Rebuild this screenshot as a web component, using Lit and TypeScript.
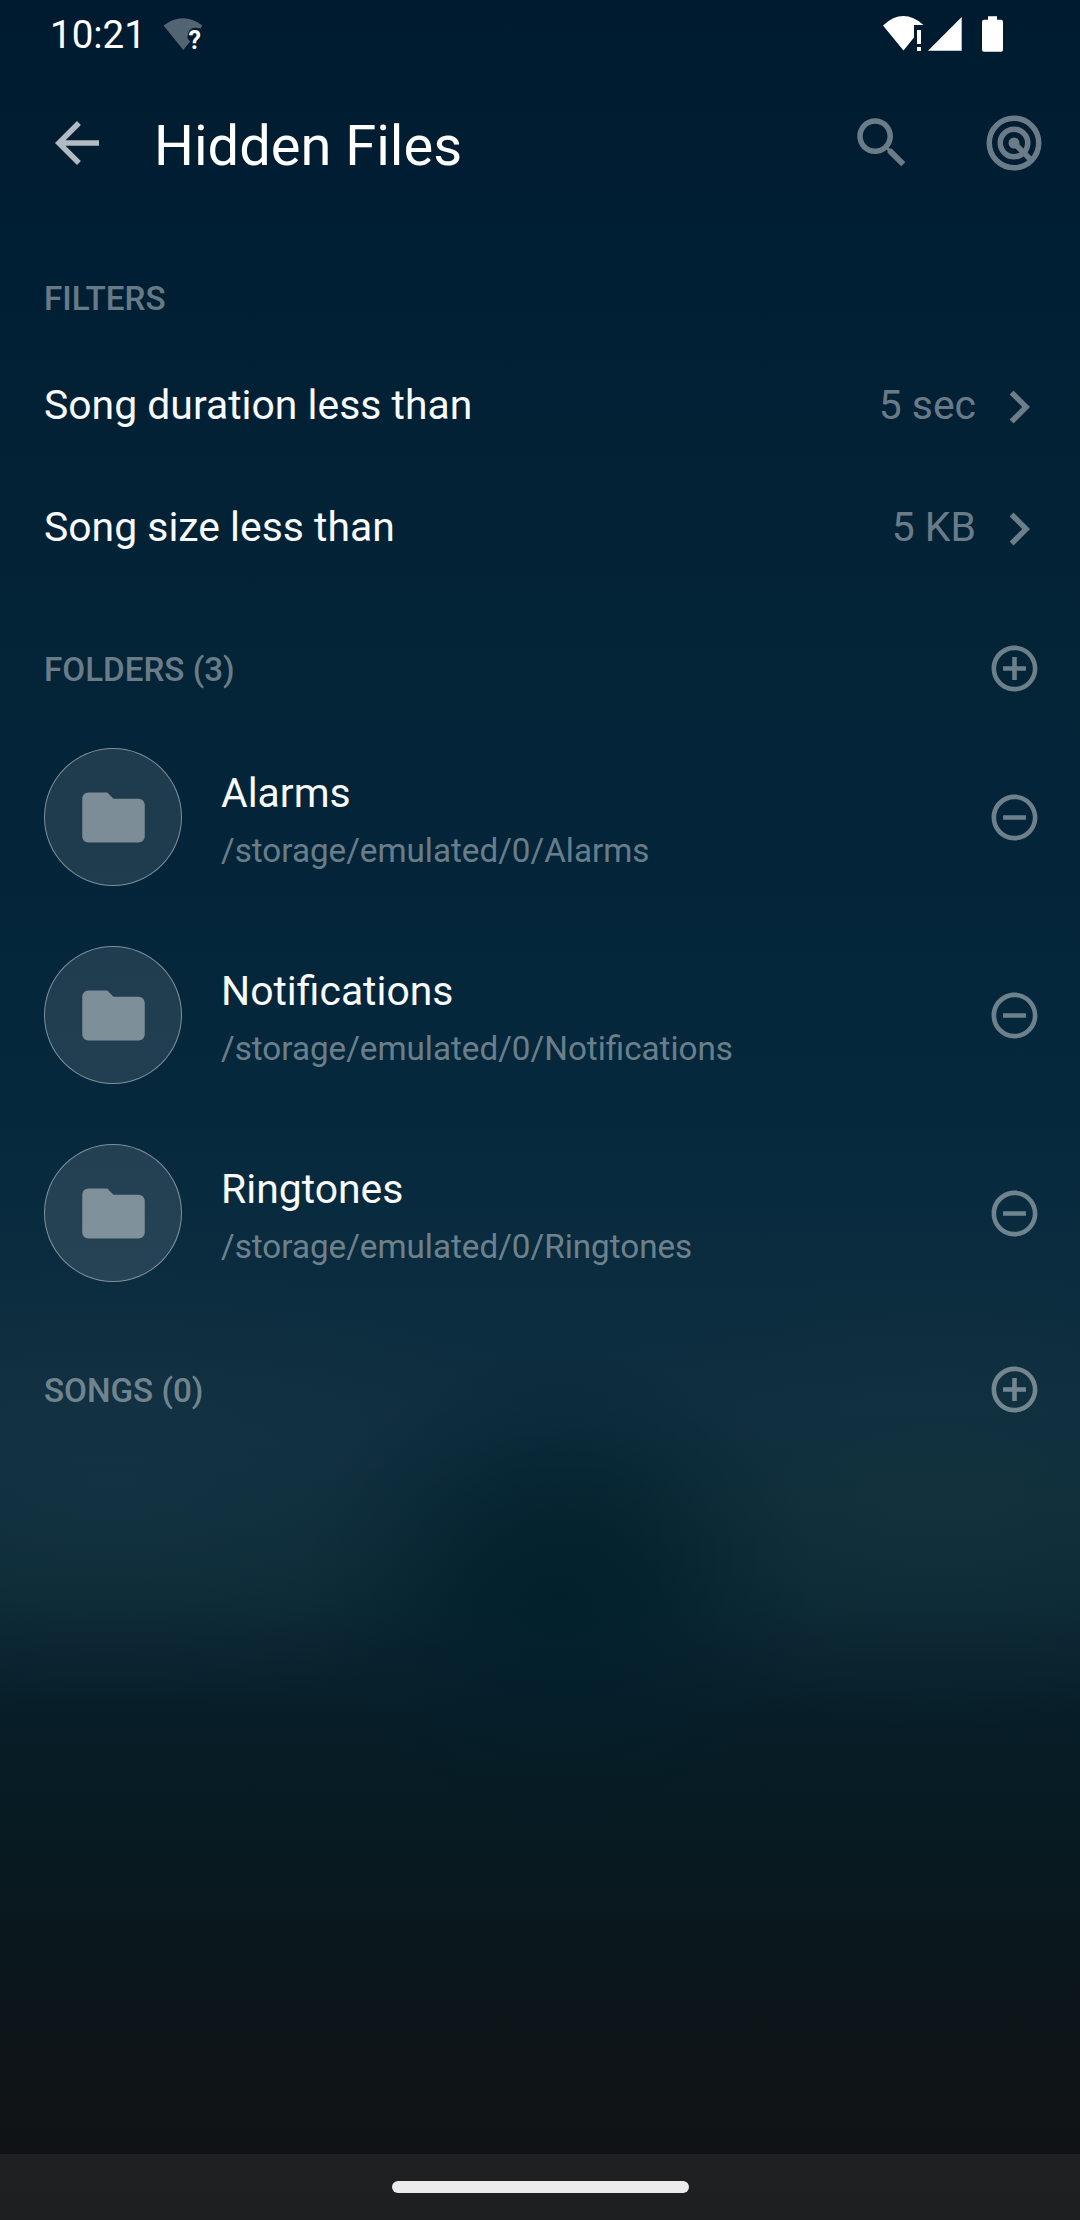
import { LitElement, html, css, svg } from "lit";
import { customElement } from "lit/decorators.js";

const PLUS =
  "M13 7h-2v4H7v2h4v4h2v-4h4v-2h-4V7zm-1-5C6.48 2 2 6.48 2 12s4.48 10 10 10 10-4.48 10-10S17.52 2 12 2zm0 18c-4.41 0-8-3.59-8-8s3.59-8 8-8 8 3.59 8 8-3.59 8-8 8z";
const MINUS =
  "M7 11v2h10v-2H7zm5-9C6.48 2 2 6.48 2 12s4.48 10 10 10 10-4.48 10-10S17.52 2 12 2zm0 18c-4.41 0-8-3.59-8-8s3.59-8 8-8 8 3.59 8 8-3.59 8-8 8z";
const BACK = "M20 11H7.83l5.59-5.59L12 4l-8 8 8 8 1.41-1.41L7.83 13H20v-2z";
const SEARCH =
  "M15.5 14h-.79l-.28-.27C15.41 12.59 16 11.11 16 9.5 16 5.91 13.09 3 9.5 3S3 5.91 3 9.5 5.91 16 9.5 16c1.61 0 3.09-.59 4.23-1.57l.27.28v.79l5 4.99L20.49 19l-4.99-5zm-6 0C7.01 14 5 11.99 5 9.5S7.01 5 9.5 5 14 7.01 14 9.5 11.99 14 9.5 14z";
const FOLDER =
  "M10 4H4c-1.1 0-1.99.9-1.99 2L2 18c0 1.1.9 2 2 2h16c1.1 0 2-.9 2-2V8c0-1.1-.9-2-2-2h-8l-2-2z";
const CHEVRON = "M10 6L8.59 7.41 13.17 12l-4.58 4.59L10 18l6-6z";

const icon = (d: string, cls: string) =>
  html`<svg class="icon ${cls}" viewBox="0 0 24 24">${svg`<path d=${d}></path>`}</svg>`;

@customElement("app-root")
export class AppRoot extends LitElement {
  private filters = [
    { label: "Song duration less than", value: "5 sec" },
    { label: "Song size less than", value: "5 KB" },
  ];
  private folders = ["Alarms", "Notifications", "Ringtones"];

  static styles = css`
    :host {
      display: flex;
      flex-direction: column;
      width: 1080px;
      height: 2220px;
      overflow: hidden;
      box-sizing: border-box;
      font-family: Roboto, "Liberation Sans", sans-serif;
      color: #f8fafb;
      background:
        radial-gradient(ellipse 260px 240px at 560px 1590px, rgba(1, 31, 43, 0.85), rgba(1, 31, 43, 0.7) 30%, rgba(1, 31, 43, 0.25) 68%, rgba(1, 31, 43, 0) 100%),
        radial-gradient(ellipse 480px 220px at 110px 1485px, rgba(26, 56, 72, 0.5), rgba(26, 56, 70, 0.25) 50%, rgba(26, 56, 70, 0) 100%),
        radial-gradient(ellipse 420px 230px at 940px 1500px, rgba(24, 54, 62, 0.45), rgba(24, 54, 62, 0.22) 50%, rgba(24, 54, 62, 0) 100%),
        linear-gradient(
          #001b30 0,
          #001e33 200px,
          #032236 500px,
          #042539 850px,
          #06283c 1100px,
          #0b2c3f 1270px,
          #0e2e40 1400px,
          #0d2d3b 1500px,
          #0b2a36 1580px,
          #09232f 1650px,
          #071d27 1730px,
          #071b22 1820px,
          #0a171c 1950px,
          #0e1418 2060px,
          #101315 2154px,
          #101214 2220px
        );
    }
    .icon { display: block; flex: none; fill: currentColor; }
    .status {
      display: flex;
      align-items: center;
      height: 66px;
      padding: 0 76px 0 50px;
      color: #fff;
    }
    .time { width: 110px; font-size: 38.5px; line-height: 66px; padding-top: 3px; }
    .wifi-q { width: 42px; height: 40px; }
    .q { font-size: 25px; font-weight: 700; }
    .sys { margin-left: auto; width: 122px; height: 40px; }
    .bar { display: flex; align-items: center; height: 154px; padding: 0 33px 0 44px; }
    .i66 { width: 66px; height: 66px; }
    .back { color: rgba(255, 255, 255, 0.7); }
    .title { flex: 1; margin: 6px 0 0 44px; font-size: 56px; font-weight: 400; color: #fff; line-height: 66px; }
    .dim { color: rgba(255, 255, 255, 0.42); }
    .search { margin-right: 66px; }
    .head {
      display: flex;
      align-items: center;
      justify-content: space-between;
      padding: 0 38px 0 44px;
      font-size: 33.2px;
      font-weight: 500;
      line-height: 40px;
      color: rgba(255, 255, 255, 0.42);
    }
    .head span { padding-top: 3px; }
    .h1 { height: 40px; margin-top: 57px; margin-bottom: 29px; }
    .h2 { height: 56px; margin-top: 50px; }
    .h3 { height: 56px; margin-top: 49px; }
    .i55 { width: 55px; height: 55px; color: rgba(255, 255, 255, 0.42); }
    .filter { display: flex; align-items: center; height: 122px; padding: 0 28px 0 44px; font-size: 40.9px; }
    .label { flex: 1; padding-bottom: 5px; }
    .value { color: rgba(255, 255, 255, 0.42); margin-right: 10px; padding-bottom: 5px; }
    .chev { width: 66px; height: 66px; color: rgba(255, 255, 255, 0.42); }
    .folder { display: flex; align-items: center; height: 198px; padding: 0 38px 0 44px; }
    .folders { margin-top: 22px; }
    .disc {
      display: grid;
      place-items: center;
      box-sizing: border-box;
      width: 138px;
      height: 138px;
      border: 1.5px solid rgba(255, 255, 255, 0.42);
      border-radius: 50%;
      background: rgba(255, 255, 255, 0.11);
    }
    .i75 { width: 75px; height: 75px; color: rgba(255, 255, 255, 0.42); }
    .text { flex: 1; margin-left: 39px; padding-top: 1px; }
    .name { font-size: 40.9px; line-height: 56px; }
    .path { font-size: 33.2px; line-height: 40px; margin-top: 10px; color: rgba(255, 255, 255, 0.42); }
    .nav {
      display: flex;
      justify-content: center;
      align-items: center;
      height: 66px;
      margin-top: auto;
      background: rgba(255, 255, 255, 0.06);
    }
    .pill { width: 297px; height: 12px; border-radius: 6px; background: #ececec; }
  `;

  render() {
    return html`
      <div class="status">
        <span class="time">10:21</span>
        <svg class="wifi-q" viewBox="160 12 42 40">
          <path d="M163.500 24.500Q183 10 202.500 24.500L200.500 27.500Q188 24 187.500 36Q187.500 39 190.500 40L183.300 49Z" fill="rgba(255,255,255,.32)"></path>
          <text class="q" x="188.500" y="47.500" fill="#fff">?</text>
        </svg>
        <svg class="sys" viewBox="882 12 122 40" fill="#fff">
          <path d="M883 24.500Q903 6 923.500 24H914V36.500L903.500 49.500Z"></path>
          <path d="M917 29h4v14h-4zM917 46h4v4h-4zM928 49.700L961.700 16V49.700Z"></path>
          <path d="M988 15.300h9v3.500h4a2 2 0 0 1 2 2V48.700a2 2 0 0 1-2 2H984a2 2 0 0 1-2-2V20.800a2 2 0 0 1 2-2h4z"></path>
        </svg>
      </div>
      <div class="bar">
        ${icon(BACK, "i66 back")}
        <div class="title">Hidden Files</div>
        ${icon(SEARCH, "i66 dim search")}
        <svg class="icon i66" viewBox="0 0 24 24" opacity=".42">
          <g fill="none" stroke="#fff" stroke-width="2">
            <circle cx="12" cy="12" r="9"></circle>
            <circle cx="12" cy="12" r="5"></circle>
            <path d="M12 12L18.200 18.200"></path>
          </g>
          <circle cx="12" cy="12" r="2" fill="#fff"></circle>
        </svg>
      </div>
      <div class="head h1"><span>FILTERS</span></div>
      ${this.filters.map(
        (f) => html`<div class="filter">
          <span class="label">${f.label}</span><span class="value">${f.value}</span>${icon(CHEVRON, "chev")}
        </div>`
      )}
      <div class="head h2"><span>FOLDERS (${this.folders.length})</span>${icon(PLUS, "i55")}</div>
      <div class="folders">
        ${this.folders.map(
          (n) => html`<div class="folder">
            <div class="disc">${icon(FOLDER, "i75")}</div>
            <div class="text">
              <div class="name">${n}</div>
              <div class="path">/storage/emulated/0/${n}</div>
            </div>
            ${icon(MINUS, "i55")}
          </div>`
        )}
      </div>
      <div class="head h3"><span>SONGS (0)</span>${icon(PLUS, "i55")}</div>
      <div class="nav"><div class="pill"></div></div>
    `;
  }
}
